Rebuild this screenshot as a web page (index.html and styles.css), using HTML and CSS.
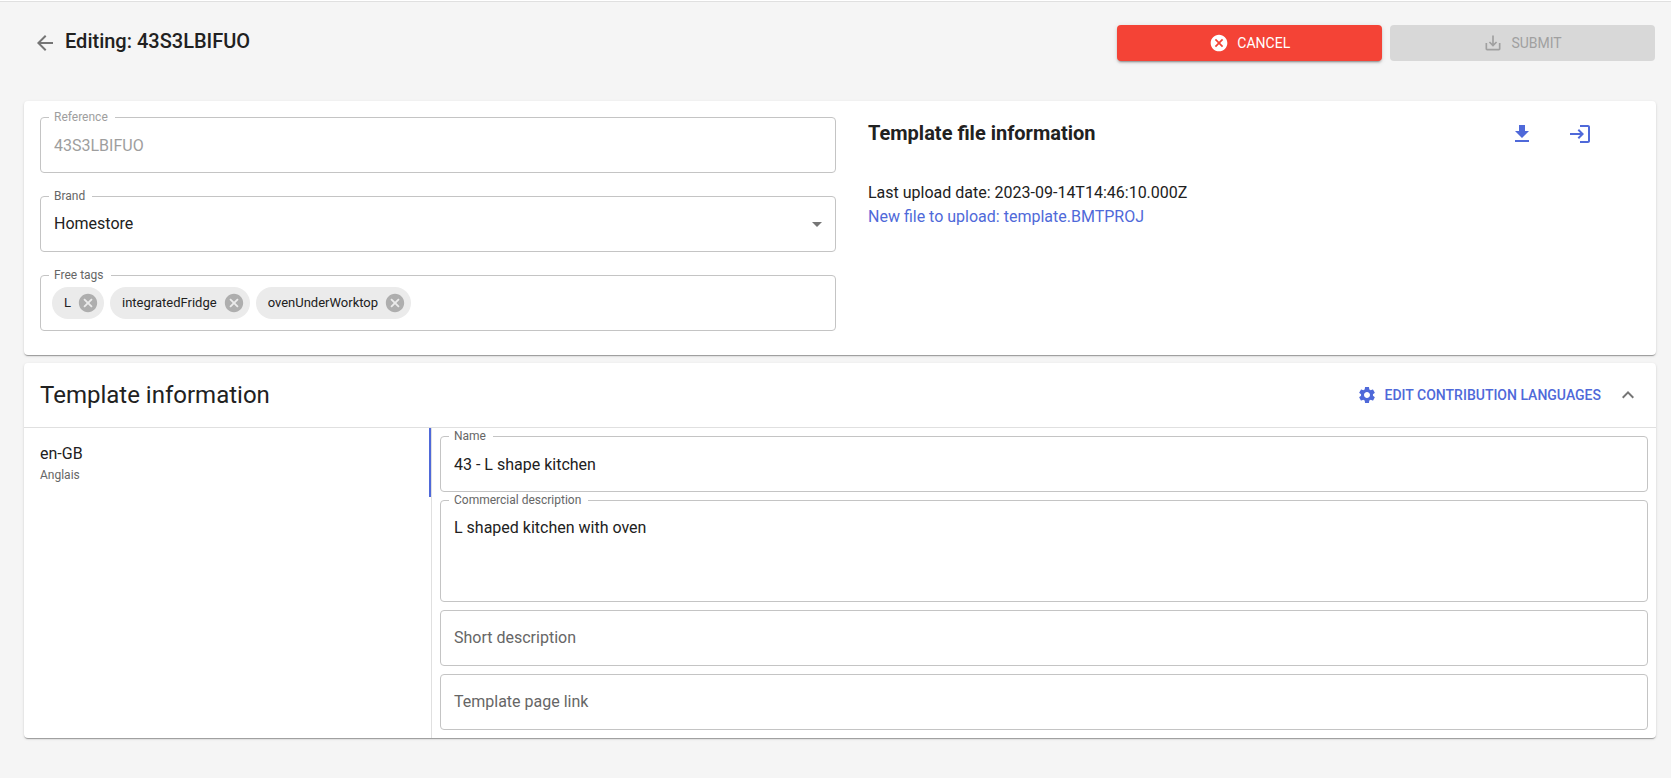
FILE: index.html
```html
<!DOCTYPE html>
<html lang="en">
<head>
<meta charset="utf-8">
<meta name="viewport" content="width=device-width, initial-scale=1">
<title>Editing: 43S3LBIFUO</title>
<link rel="stylesheet" href="styles.css">
</head>
<body>
<div class="topline"></div>
<header class="page-header">
  <div class="heading">
    <button class="icon-button back" type="button" aria-label="Back">
      <svg class="icon" viewBox="0 0 24 24"><path d="M20 11H7.83l5.59-5.59L12 4l-8 8 8 8 1.41-1.41L7.83 13H20v-2z"/></svg>
    </button>
    <h1 class="page-title">Editing: 43S3LBIFUO</h1>
  </div>
  <div class="actions">
    <button class="button button-cancel" type="button">
      <svg class="icon icon-small" viewBox="0 0 24 24"><path d="M12 2C6.47 2 2 6.47 2 12s4.47 10 10 10 10-4.47 10-10S17.53 2 12 2zm5 13.59L15.59 17 12 13.41 8.41 17 7 15.59 10.59 12 7 8.41 8.41 7 12 10.59 15.59 7 17 8.41 13.41 12 17 15.59z"/></svg>
      <span>CANCEL</span>
    </button>
    <button class="button button-submit" type="submit" disabled>
      <svg class="icon icon-small" viewBox="0 0 24 24"><path d="M19 12v7H5v-7H3v7c0 1.1.9 2 2 2h14c1.1 0 2-.9 2-2v-7h-2zm-6 .67l2.59-2.58L17 11.5l-5 5-5-5 1.41-1.41L11 12.67V3h2z"/></svg>
      <span>SUBMIT</span>
    </button>
  </div>
</header>

<main class="content">
  <section class="card summary">
    <div class="summary-fields">
      <div class="field">
        <input class="control" id="reference" type="text" value="43S3LBIFUO" disabled>
        <label class="field-label disabled" for="reference">Reference</label>
      </div>
      <div class="field">
        <select class="control" id="brand"><option>Homestore</option></select>
        <label class="field-label" for="brand">Brand</label>
        <svg class="icon select-arrow" viewBox="0 0 24 24"><path d="M7 10l5 5 5-5z"/></svg>
      </div>
      <div class="field tags">
        <label class="field-label" for="tags">Free tags</label>
        <span class="chip">L<button class="chip-delete" type="button" aria-label="Remove L"><svg viewBox="0 0 24 24"><path d="M12 2C6.47 2 2 6.47 2 12s4.47 10 10 10 10-4.47 10-10S17.53 2 12 2zm5 13.59L15.59 17 12 13.41 8.41 17 7 15.59 10.59 12 7 8.41 8.41 7 12 10.59 15.59 7 17 8.41 13.41 12 17 15.59z"/></svg></button></span>
        <span class="chip">integratedFridge<button class="chip-delete" type="button" aria-label="Remove integratedFridge"><svg viewBox="0 0 24 24"><path d="M12 2C6.47 2 2 6.47 2 12s4.47 10 10 10 10-4.47 10-10S17.53 2 12 2zm5 13.59L15.59 17 12 13.41 8.41 17 7 15.59 10.59 12 7 8.41 8.41 7 12 10.59 15.59 7 17 8.41 13.41 12 17 15.59z"/></svg></button></span>
        <span class="chip">ovenUnderWorktop<button class="chip-delete" type="button" aria-label="Remove ovenUnderWorktop"><svg viewBox="0 0 24 24"><path d="M12 2C6.47 2 2 6.47 2 12s4.47 10 10 10 10-4.47 10-10S17.53 2 12 2zm5 13.59L15.59 17 12 13.41 8.41 17 7 15.59 10.59 12 7 8.41 8.41 7 12 10.59 15.59 7 17 8.41 13.41 12 17 15.59z"/></svg></button></span>
        <input class="tag-input" id="tags" type="text">
      </div>
    </div>
    <div class="file-info">
      <div class="file-head">
        <h2 class="file-title">Template file information</h2>
        <div class="file-actions">
          <button class="icon-button primary" type="button" aria-label="Download">
            <svg class="icon" viewBox="0 0 24 24"><path d="M19 9h-4V3H9v6H5l7 7 7-7zM5 18v2h14v-2H5z"/></svg>
          </button>
          <button class="icon-button primary" type="button" aria-label="Upload">
            <svg class="icon" viewBox="0 0 24 24"><path d="M11 7L9.6 8.4l2.6 2.6H2v2h10.2l-2.6 2.6L11 17l5-5-5-5zm9 12h-8v2h8c1.1 0 2-.9 2-2V5c0-1.1-.9-2-2-2h-8v2h8v14z"/></svg>
          </button>
        </div>
      </div>
      <p class="line">Last upload date: 2023-09-14T14:46:10.000Z</p>
      <p class="line primary">New file to upload: template.BMTPROJ</p>
    </div>
  </section>

  <section class="card">
    <div class="section-head">
      <h2 class="section-title">Template information</h2>
      <button class="text-button" type="button">
        <svg class="icon icon-small" viewBox="0 0 24 24"><path d="M19.14 12.94c.04-.3.06-.61.06-.94 0-.32-.02-.64-.07-.94l2.03-1.58c.18-.14.23-.41.12-.61l-1.92-3.32c-.12-.22-.37-.29-.59-.22l-2.39.96c-.5-.38-1.03-.7-1.62-.94l-.36-2.54c-.04-.24-.24-.41-.48-.41h-3.84c-.24 0-.43.17-.47.41l-.36 2.54c-.59.24-1.13.57-1.62.94l-2.39-.96c-.22-.08-.47 0-.59.22L2.74 8.87c-.12.21-.08.47.12.61l2.03 1.58c-.05.3-.09.63-.09.94s.02.64.07.94l-2.03 1.58c-.18.14-.23.41-.12.61l1.92 3.32c.12.22.37.29.59.22l2.39-.96c.5.38 1.03.7 1.62.94l.36 2.54c.05.24.24.41.48.41h3.84c.24 0 .44-.17.47-.41l.36-2.54c.59-.24 1.13-.56 1.62-.94l2.39.96c.22.08.47 0 .59-.22l1.92-3.32c.12-.22.07-.47-.12-.61l-2.01-1.58zM12 15.6c-1.98 0-3.6-1.62-3.6-3.6s1.62-3.6 3.6-3.6 3.6 1.62 3.6 3.6-1.62 3.6-3.6 3.6z"/></svg>
        <span>EDIT CONTRIBUTION LANGUAGES</span>
      </button>
      <button class="icon-button" type="button" aria-label="Collapse">
        <svg class="icon" viewBox="0 0 24 24"><path d="M12 8l-6 6 1.41 1.41L12 10.83l4.59 4.58L18 14z"/></svg>
      </button>
    </div>
    <div class="section-body">
      <nav class="languages" aria-label="Languages">
        <button class="language" type="button">
          <span class="language-code">en-GB</span>
          <span class="language-name">Anglais</span>
        </button>
      </nav>
      <div class="language-fields">
        <div class="field">
          <input class="control" id="name" type="text" value="43 - L shape kitchen">
          <label class="field-label" for="name">Name</label>
        </div>
        <div class="field">
          <textarea class="control control-multiline" id="commercial" rows="3">L shaped kitchen with oven</textarea>
          <label class="field-label" for="commercial">Commercial description</label>
        </div>
        <div class="field">
          <input class="control" id="short" type="text">
          <label class="resting-label" for="short">Short description</label>
        </div>
        <div class="field">
          <input class="control" id="link" type="text">
          <label class="resting-label" for="link">Template page link</label>
        </div>
      </div>
    </div>
  </section>
</main>
</body>
</html>
```
FILE: styles.css
```css
* {
  box-sizing: border-box;
}

body {
  margin: 0;
  background: #f5f5f5;
  color: #212121;
  font: 16px/24px Roboto, "Liberation Sans", sans-serif;
}

h1, h2, p {
  margin: 0;
}

button, input, select, textarea {
  margin: 0;
  font: inherit;
  color: inherit;
}

button {
  padding: 0;
  border: 0;
  background: none;
}

.topline {
  height: 2px;
  background: #fff;
  border-bottom: 1px solid #e0e0e0;
}

.icon {
  display: block;
  flex: none;
  width: 24px;
  height: 24px;
  fill: currentColor;
}

.icon-small {
  width: 20px;
  height: 20px;
}

.icon-button {
  color: #757575;
}

.primary {
  color: #4f69d9;
}

.page-header {
  display: flex;
  align-items: center;
  justify-content: space-between;
  gap: 16px;
  padding: 23px 16px 40px 33px;
}

.heading {
  display: flex;
  align-items: center;
  gap: 8px;
}

.page-title {
  padding-bottom: 4px;
  font-size: 20px;
  line-height: 32px;
  font-weight: 500;
}

.actions {
  display: grid;
  grid-template-columns: 1fr 1fr;
  gap: 8px;
  width: calc(100% / 3 - 3px);
  min-width: 300px;
}

.button {
  display: flex;
  align-items: center;
  justify-content: center;
  gap: 8px;
  height: 36px;
  border-radius: 4px;
  font-size: 14px;
}

.button-cancel {
  background: #f44336;
  color: #fff;
  box-shadow: 0 3px 1px -2px rgba(0, 0, 0, 0.2), 0 2px 2px rgba(0, 0, 0, 0.14), 0 1px 5px rgba(0, 0, 0, 0.12);
}

.button-submit {
  background: #d8d8d8;
  color: #a0a0a0;
}

.content {
  display: grid;
  gap: 8px;
  padding: 0 15px 40px 24px;
}

.card {
  background: #fff;
  border-radius: 4px;
  box-shadow: 0 2px 1px -1px rgba(0, 0, 0, 0.2), 0 1px 1px rgba(0, 0, 0, 0.14), 0 1px 3px rgba(0, 0, 0, 0.12);
}

.summary {
  display: grid;
  grid-template-columns: calc(50% - 4px) 1fr;
  gap: 32px;
  padding: 16px 16px 24px;
}

.summary-fields {
  display: grid;
  gap: 23px;
}

.field {
  position: relative;
  display: flex;
  min-width: 0;
}

.control {
  width: 100%;
  height: 56px;
  padding: 0 13px;
  border: 1px solid #c4c4c4;
  border-radius: 4px;
  background: transparent;
  appearance: none;
}

.control:disabled {
  color: #9e9e9e;
  opacity: 1;
}

.control-multiline {
  height: 102px;
  padding: 15px 13px;
  resize: none;
}

.field-label {
  position: absolute;
  top: -8px;
  left: 9px;
  padding: 0 7px 0 5px;
  background: #fff;
  color: #666;
  font-size: 12px;
  line-height: 16px;
}

.field-label.disabled {
  color: #9e9e9e;
}

.resting-label {
  position: absolute;
  top: 16px;
  left: 14px;
  color: #666;
}

.select-arrow {
  position: absolute;
  top: 16px;
  right: 7px;
  color: #757575;
  pointer-events: none;
}

.tags {
  align-items: center;
  gap: 6px;
  height: 56px;
  padding: 0 11px;
  border: 1px solid #c4c4c4;
  border-radius: 4px;
}

.tags .field-label {
  top: -9px;
  left: 8px;
}

.chip {
  display: flex;
  align-items: center;
  gap: 6px;
  height: 32px;
  padding: 0 5px 0 12px;
  border-radius: 16px;
  background: #ebebeb;
  font-size: 13px;
}

.chip-delete {
  width: 22px;
  height: 22px;
}

.chip-delete svg {
  display: block;
  fill: #aeaeae;
}

.tag-input {
  flex: 1;
  min-width: 30px;
  border: 0;
  outline: 0;
  background: none;
}

.file-head {
  display: flex;
  align-items: center;
  justify-content: space-between;
  padding: 0 48px 32px 0;
}

.file-title {
  font-size: 20px;
  line-height: 32px;
  font-weight: 700;
}

.file-actions {
  display: flex;
  gap: 34px;
  padding-top: 2px;
}

.section-head {
  display: flex;
  align-items: center;
  gap: 15px;
  padding: 16px;
  border-bottom: 1px solid #e0e0e0;
}

.section-title {
  flex: 1;
  font-size: 24px;
  line-height: 32px;
  font-weight: 400;
}

.text-button {
  display: flex;
  align-items: center;
  gap: 8px;
  color: #4f69d9;
  font-size: 14px;
  font-weight: 500;
}

.section-body {
  display: grid;
  grid-template-columns: 1fr 3fr;
}

.languages {
  border-right: 1px solid #e0e0e0;
}

.language {
  display: grid;
  width: 100%;
  padding: 14px 16px 13px;
  border-right: 2px solid #4f69d9;
  text-align: left;
}

.language-name {
  color: #666;
  font-size: 12px;
  line-height: 18px;
}

.language-fields {
  display: grid;
  gap: 8px;
  min-width: 0;
  padding: 8px;
}
```
